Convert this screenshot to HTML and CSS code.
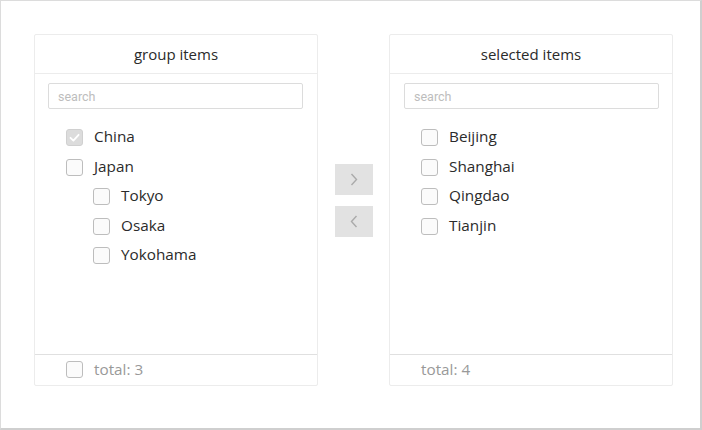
FILE: index.html
```html
<!DOCTYPE html>
<html>
<head>
<meta charset="utf-8">
<link rel="stylesheet" href="styles.css">
</head>
<body>
<div class="frame">
  <div class="transfer">
    <div class="panel">
      <div class="panel-head">group items</div>
      <div class="search-wrap"><input class="search" type="text" placeholder="search"></div>
      <ul class="list">
        <li class="row"><span class="cb cb-checked-disabled"><svg viewBox="0 0 17 17" width="17" height="17"><path d="M4.5 8.8 L7.4 11.6 L12.6 5.8" fill="none" stroke="#fff" stroke-width="1.8" stroke-linecap="round" stroke-linejoin="round"/></svg></span><span class="label">China</span></li>
        <li class="row"><span class="cb"></span><span class="label">Japan</span></li>
        <li class="row nested"><span class="cb"></span><span class="label">Tokyo</span></li>
        <li class="row nested"><span class="cb"></span><span class="label">Osaka</span></li>
        <li class="row nested"><span class="cb"></span><span class="label">Yokohama</span></li>
      </ul>
      <div class="panel-foot"><span class="cb"></span><span class="total">total: 3</span></div>
    </div>
    <div class="actions">
      <button class="btn" type="button"><svg viewBox="0 0 38 31" width="38" height="31"><path d="M16.5 10 L21.5 15.5 L16.5 21" fill="none" stroke="#aaa" stroke-width="1.4"/></svg></button>
      <button class="btn" type="button"><svg viewBox="0 0 38 31" width="38" height="31"><path d="M21.5 10 L16.5 15.5 L21.5 21" fill="none" stroke="#aaa" stroke-width="1.4"/></svg></button>
    </div>
    <div class="panel">
      <div class="panel-head">selected items</div>
      <div class="search-wrap"><input class="search" type="text" placeholder="search"></div>
      <ul class="list">
        <li class="row"><span class="cb"></span><span class="label">Beijing</span></li>
        <li class="row"><span class="cb"></span><span class="label">Shanghai</span></li>
        <li class="row"><span class="cb"></span><span class="label">Qingdao</span></li>
        <li class="row"><span class="cb"></span><span class="label">Tianjin</span></li>
      </ul>
      <div class="panel-foot"><span class="total">total: 4</span></div>
    </div>
  </div>
</div>
</body>
</html>
```
FILE: styles.css
```css
* { box-sizing: border-box; }
html, body { margin: 0; padding: 0; background: #fff; }
body {
  font-family: "Open Sans", "Noto Sans", sans-serif;
  color: #333;
  font-size: 15px;
}
.frame {
  width: 702px;
  height: 430px;
  border: 1px solid #dcdcdc;
  border-right: 2px solid #cfcfcf;
  border-bottom: 2px solid #cfcfcf;
  padding: 33px 0 0 33px;
}
.transfer {
  display: flex;
  align-items: stretch;
}
.panel {
  width: 284px;
  height: 352px;
  border: 1px solid #ececec;
  border-radius: 2px;
  display: flex;
  flex-direction: column;
}
.panel-head {
  height: 39px;
  border-bottom: 1px solid #ececec;
  display: flex;
  align-items: center;
  justify-content: center;
  font-size: 15px;
  color: #2b2b2b;
  padding-bottom: 1px;
}
.search-wrap {
  padding: 9px 14px 0 13px;
}
.panel + .actions + .panel .search-wrap {
  padding: 9px 13px 0 14px;
}
.search {
  display: block;
  width: 100%;
  height: 26px;
  border: 1px solid #dcdcdc;
  border-radius: 2px;
  padding: 0 9px;
  font-family: Roboto, "Liberation Sans", sans-serif;
  font-size: 12.5px;
  color: #333;
  outline: none;
}
.search::placeholder { color: #bdbdbd; }
.list {
  list-style: none;
  margin: 0;
  padding: 14px 0 0 31px;
  flex: 1;
}
.row {
  height: 29.5px;
  display: flex;
  align-items: center;
}
.row.nested { padding-left: 27px; }
.cb {
  width: 17px;
  height: 17px;
  border: 1px solid #bdbdbd;
  border-radius: 3px;
  background: #fbfbfb;
  flex: none;
  display: block;
}
.cb svg { display: block; margin: -1px; }
.cb-checked-disabled {
  background: #dcdcdc;
  border-color: #d0d0d0;
}
.label {
  margin-left: 11px;
  color: #2b2b2b;
  line-height: 1;
  position: relative;
  top: -1px;
  font-size: 15.3px;
}
.panel-foot {
  height: 31px;
  border-top: 1px solid #e0e0e0;
  display: flex;
  align-items: center;
  padding-left: 31px;
  padding-bottom: 1px;
}
.total {
  margin-left: 11px;
  color: #999;
  line-height: 1;
  font-size: 15.3px;
}
.panel-foot .total:first-child { margin-left: 0; }
.actions {
  width: 71px;
  display: flex;
  flex-direction: column;
  align-items: center;
  justify-content: flex-start;
  gap: 11px;
  padding-top: 130px;
}
.btn {
  width: 38px;
  height: 31px;
  border: none;
  background: #e2e2e2;
  padding: 0;
  margin: 0;
  display: block;
  border-radius: 0;
}
.btn svg { display: block; }
```
